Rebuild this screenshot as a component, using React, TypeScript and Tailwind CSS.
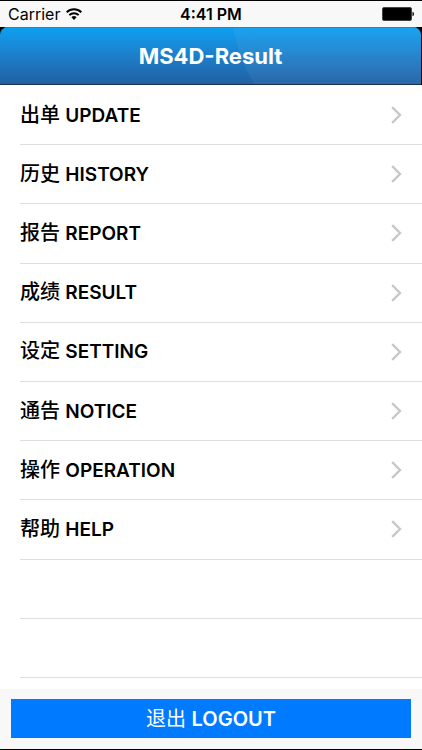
interface MenuItem {
  zh: string;
  en: string;
}

const MENU: MenuItem[] = [
  { zh: '出单', en: 'UPDATE' },
  { zh: '历史', en: 'HISTORY' },
  { zh: '报告', en: 'REPORT' },
  { zh: '成绩', en: 'RESULT' },
  { zh: '设定', en: 'SETTING' },
  { zh: '通告', en: 'NOTICE' },
  { zh: '操作', en: 'OPERATION' },
  { zh: '帮助', en: 'HELP' },
];

const EMPTY_ROWS = 2;

export default function App() {
  return (
    <div className="min-h-screen flex flex-col bg-white text-black border-y border-black font-['Inter','Noto_Sans_CJK_SC',sans-serif]">
      <StatusBar />

      <header className="bg-black pr-px">
        <div className="relative h-[58px] flex items-center justify-center overflow-hidden rounded-t-lg border-b border-[#1c3048] bg-linear-to-b from-[#0aa0f2] to-[#2060a4]">
          {/* Glossy highlight */}
          <svg className="absolute inset-0 w-full h-full" viewBox="0 0 421 57" preserveAspectRatio="none" aria-hidden="true">
            <path d="M233 0 Q238 30 254 57 H421 V0 Z" fill="#fff" fillOpacity="0.05" />
            <path d="M0 .5H421" stroke="#1b8fb8" />
          </svg>
          <h1 className="relative text-[22px] leading-7 font-bold text-white">MS4D-Result</h1>
        </div>
      </header>

      <ul className="flex-1 grid auto-rows-fr pl-5 pt-px pb-[11px]">
        {MENU.map((item) => (
          <li key={item.en} className="flex border-b border-[#dedee0]">
            <MenuButton item={item} />
          </li>
        ))}
        {Array.from({ length: EMPTY_ROWS }, (_, i) => (
          <li key={i} className="border-b border-[#dedee0]" aria-hidden="true" />
        ))}
      </ul>

      <footer className="bg-[#f8f8f8] px-[11px] pt-[10px] pb-[11px]">
        <button type="button" className="w-full h-[39px] bg-[#007aff] text-white text-xl leading-6">
          退出 <span className="font-semibold">LOGOUT</span>
        </button>
      </footer>
    </div>
  );
}

/* ── MenuButton ── */
function MenuButton({ item }: { item: MenuItem }) {
  return (
    <button type="button" className="flex-1 min-h-12 flex items-center justify-between pr-5 text-left text-xl leading-6 font-medium">
      <span>
        {item.zh} <span className="text-[19px] font-semibold">{item.en}</span>
      </span>
      <svg width="11" height="18" viewBox="0 0 11 18" fill="none" stroke="#c7c7cc" strokeWidth="2.4" aria-hidden="true">
        <path d="M1.2 1.2 9 9 1.2 16.8" />
      </svg>
    </button>
  );
}

/* ── StatusBar ── */
function StatusBar() {
  return (
    <div className="h-[26px] grid grid-cols-3 items-center bg-[#f8f8f8] px-2 text-base">
      <div className="flex items-center gap-1.5">
        <span>Carrier</span>
        <svg width="16" height="12" viewBox="0 0 16 12" fill="none" stroke="#000" strokeWidth="2" aria-hidden="true">
          <path d="M.7 4.3a10.4 10.4 0 0 1 14.6 0" />
          <path d="M3.3 7.1a6.7 6.7 0 0 1 9.4 0" />
          <path d="M8 12 5.4 9.3a3.7 3.7 0 0 1 5.2 0Z" fill="#000" stroke="none" />
        </svg>
      </div>
      <span className="text-center font-semibold">4:41 PM</span>
      <svg className="justify-self-end" width="32" height="14" viewBox="0 0 32 14" aria-hidden="true">
        <rect x=".5" y=".5" width="29" height="13" rx="1.5" fill="#000" stroke="#444" />
        <path d="M30.5 4.7q1.5.5 1.5 2.3t-1.5 2.3z" fill="#000" />
      </svg>
    </div>
  );
}
